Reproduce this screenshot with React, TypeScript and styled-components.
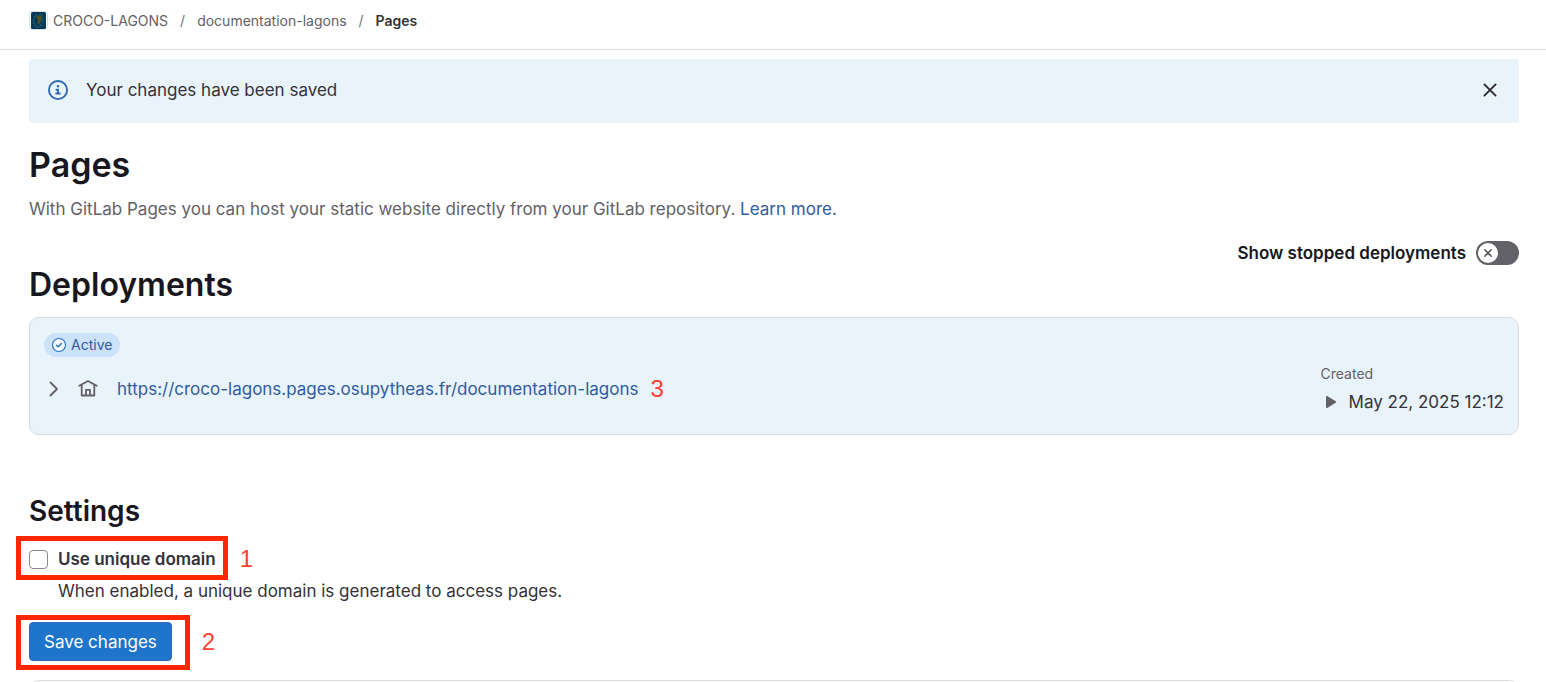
import React, { useState } from 'react';
import styled, { createGlobalStyle, css } from 'styled-components';

const GlobalStyle = createGlobalStyle`
  *, *::before, *::after { box-sizing: border-box; }
  body {
    margin: 0;
    background: #fff;
    color: #333238;
    font-family: Inter, "Noto Sans", sans-serif;
    font-size: 17px;
    line-height: 24px;
  }
  button, input { font: inherit; }
`;

const Shell = styled.div`
  height: 100vh;
  overflow: hidden;
`;

const TopBar = styled.header`
  height: 50px;
  padding: 0 29px 8px;
  display: flex;
  align-items: center;
  border-bottom: 1px solid #dcdcde;
`;

const Crumbs = styled.ol`
  display: flex;
  align-items: center;
  margin: 0;
  padding: 0;
  list-style: none;
  font-size: 14px;
  line-height: 20px;
`;

const Crumb = styled.li`
  display: flex;
  align-items: center;
  & + &::before {
    content: "/";
    margin: 0 12px;
    color: #737278;
  }
`;

const CrumbLink = styled.a<{ $current?: boolean }>`
  display: flex;
  align-items: center;
  gap: 5px;
  text-decoration: none;
  color: ${(p) => (p.$current ? '#333238' : '#626168')};
  font-weight: ${(p) => (p.$current ? 600 : 400)};
`;

const Content = styled.main`
  padding: 9px 27px 0 29px;
`;

const Alert = styled.div`
  display: flex;
  align-items: center;
  height: 64px;
  padding: 0 19px 2px;
  border-radius: 4px;
  background: #e9f3fc;
`;

const AlertText = styled.p`
  flex: 1;
  margin: 0 0 0 18px;
`;

const IconButton = styled.button`
  display: flex;
  align-items: center;
  justify-content: center;
  width: 20px;
  height: 20px;
  padding: 0;
  border: 0;
  background: none;
  color: #28272d;
  cursor: pointer;
`;

const PageTitle = styled.h1`
  margin: 20px 0 0;
  font-size: 34px;
  line-height: 44px;
  font-weight: 600;
  color: #18171d;
`;

const Intro = styled.p`
  margin: 10px 0 0;
  color: #626168;
`;

const Link = styled.a`
  color: #2f5ca0;
  text-decoration: none;
`;

const ToggleRow = styled.label`
  display: flex;
  align-items: center;
  justify-content: flex-end;
  gap: 10px;
  margin-top: 20px;
  font-weight: 600;
  color: #18171d;
  cursor: pointer;
`;

const Toggle = styled.button<{ $on: boolean }>`
  display: flex;
  align-items: center;
  justify-content: ${(p) => (p.$on ? 'flex-end' : 'flex-start')};
  width: 43px;
  height: 24px;
  padding: 0 2px;
  border: 0;
  border-radius: 12px;
  background: ${(p) => (p.$on ? '#1f75cb' : '#626168')};
  cursor: pointer;
`;

const Knob = styled.span`
  display: flex;
  align-items: center;
  justify-content: center;
  width: 20px;
  height: 20px;
  border-radius: 50%;
  background: #fff;
  color: #626168;
`;

const SectionTitle = styled.h2<{ $small?: boolean }>`
  margin: 0;
  font-size: ${(p) => (p.$small ? 28 : 32)}px;
  line-height: 40px;
  font-weight: 600;
  color: #18171d;
`;

const Card = styled.section`
  display: flex;
  align-items: center;
  justify-content: space-between;
  height: 118px;
  margin: 12px 0 56px;
  padding: 0 14px;
  border: 1px solid #d7dbe2;
  border-radius: 10px;
  background: #e9f3fc;
`;

const CardMain = styled.div`
  display: flex;
  flex-direction: column;
  align-items: flex-start;
  gap: 20px;
  padding-bottom: 18px;
`;

const Badge = styled.span`
  display: flex;
  align-items: center;
  gap: 4px;
  height: 24px;
  padding: 0 8px 0 7px;
  border-radius: 12px;
  background: #cbe2f9;
  color: #2f5ca0;
  font-size: 14px;
  line-height: 24px;
`;

const UrlRow = styled.div`
  display: flex;
  align-items: center;
  color: #626168;
  & > svg { margin: 0 19px 0 14px; }
  & > button { color: #626168; }
`;

const Created = styled.div`
  padding-top: 26px;
`;

const CreatedLabel = styled.div`
  font-size: 14px;
  line-height: 20px;
  color: #626168;
`;

const CreatedValue = styled.div`
  display: flex;
  align-items: center;
  gap: 12px;
  margin-top: 6px;
  padding-left: 4px;
`;

const outline = css`
  position: relative;
  width: max-content;
  &::after {
    content: "";
    position: absolute;
    border: 5px solid #ff2600;
    pointer-events: none;
  }
`;

const Row = styled.div<{ $top: number }>`
  display: flex;
  align-items: center;
  margin-top: ${(p) => p.$top}px;
`;

const CheckRow = styled.label`
  ${outline}
  display: flex;
  align-items: center;
  gap: 10px;
  font-weight: 600;
  &::after { inset: -11px -12px -9px -13px; }
`;

const Checkbox = styled.input`
  appearance: none;
  width: 19px;
  height: 19px;
  margin: 0;
  border: 1px solid #89888d;
  border-radius: 4px;
  background: #fff;
  &:checked { background: #1f75cb; border-color: #1f75cb; }
`;

const Help = styled.p`
  margin: 8px 0 0 29px;
`;

const SaveWrap = styled.div`
  ${outline}
  &::after { inset: -7px -18px -9px -13px; }
`;

const SaveButton = styled.button`
  display: block;
  height: 39px;
  padding: 0 14px;
  border: 1px solid #2f68b4;
  border-radius: 4px;
  background: #1f75cb;
  color: #fff;
  cursor: pointer;
`;

const StepNumber = styled.span<{ $gap: number }>`
  margin-left: ${(p) => p.$gap}px;
  font-family: "Liberation Sans", Arial, sans-serif;
  font-size: 24px;
  line-height: 24px;
  color: #ff4034;
`;

const NextPanel = styled.section`
  height: 60px;
  margin-top: 19px;
  border: 1px solid #dcdcde;
  border-radius: 10px;
`;

const Avatar = () => (
  <svg width="19" height="19" viewBox="0 0 19 19" aria-hidden="true">
    <rect x="0.5" y="0.5" width="18" height="18" rx="3" fill="#fff" stroke="#dcdcde" />
    <rect x="2" y="1" width="15" height="17" rx="1.5" fill="#073a59" />
    <path d="M8 3.5C4 6 3.5 11 6 14.500s5 1 6.500-1" fill="none" stroke="#2f7480" strokeWidth="1" strokeDasharray="2 1" />
    <path d="M11 3c4 2 3.500 8 1 11" fill="none" stroke="#256b72" strokeWidth="1" strokeDasharray="1 1" />
    <path d="M7 5.500l3.500-1.500 2.500 2-1 4-2 3.500-1.500-.5.500-4z" fill="#574f21" />
  </svg>
);

const InfoIcon = () => (
  <svg width="20" height="20" viewBox="0 0 16 16" fill="#2f68b4" aria-hidden="true">
    <path fillRule="evenodd" clipRule="evenodd" d="M8 14.500a6.500 6.500 0 1 0 0-13 6.500 6.500 0 0 0 0 13ZM8 16A8 8 0 1 0 8 0a8 8 0 0 0 0 16Zm1-11a1 1 0 1 1-2 0 1 1 0 0 1 2 0ZM5.750 10.750A.75.75 0 0 1 6.500 10h.75V8.500h-.5a.75.75 0 0 1 0-1.500h2v3h.75a.75.75 0 0 1 0 1.500h-3a.75.75 0 0 1-.75-.75Z" />
  </svg>
);

const CrossIcon = ({ size, width }: { size: number; width: number }) => (
  <svg width={size} height={size} viewBox="0 0 16 16" fill="none" stroke="currentColor" strokeWidth={width} strokeLinecap="round" aria-hidden="true">
    <path d="M3 3l10 10M13 3L3 13" />
  </svg>
);

const CheckCircle = () => (
  <svg width="16" height="16" viewBox="0 0 16 16" fill="none" stroke="#1f75cb" aria-hidden="true">
    <circle cx="8" cy="8" r="6.500" fill="#fff" strokeWidth="1.200" />
    <path d="M5.500 8.200l1.700 1.600 3.200-3.300" strokeWidth="1.500" strokeLinecap="round" strokeLinejoin="round" />
  </svg>
);

const Chevron = () => (
  <svg width="10" height="16" viewBox="0 0 10 16" fill="none" stroke="currentColor" strokeWidth="1.800" strokeLinecap="round" strokeLinejoin="round" aria-hidden="true">
    <path d="M1.500 1.500L8 8l-6.500 6.500" />
  </svg>
);

const HomeIcon = () => (
  <svg width="20" height="20" viewBox="0 0 20 20" fill="none" stroke="currentColor" strokeWidth="1.800" strokeLinecap="round" strokeLinejoin="round" aria-hidden="true">
    <path d="M1.300 6.800L10 2l8.700 4.800M3.700 6v10.500h12.600V6M8 16.500v-5.700h4v5.700" />
  </svg>
);

const PlayIcon = () => (
  <svg width="12" height="14" viewBox="0 0 12 14" fill="#626168" aria-hidden="true">
    <path d="M1 1.700c0-.7.600-1 1.200-.7l8.500 5.300c.5.400.5 1 0 1.400L2.200 13c-.6.300-1.200 0-1.200-.7z" />
  </svg>
);

export default function App() {
  const [showStopped, setShowStopped] = useState(false);

  return (
    <Shell>
      <GlobalStyle />
      <TopBar>
        <nav aria-label="Breadcrumb">
          <Crumbs>
            <Crumb><CrumbLink href="#"><Avatar />CROCO-LAGONS</CrumbLink></Crumb>
            <Crumb><CrumbLink href="#">documentation-lagons</CrumbLink></Crumb>
            <Crumb><CrumbLink href="#" $current aria-current="page">Pages</CrumbLink></Crumb>
          </Crumbs>
        </nav>
      </TopBar>
      <Content>
        <Alert role="status">
          <InfoIcon />
          <AlertText>Your changes have been saved</AlertText>
          <IconButton aria-label="Dismiss"><CrossIcon size={18} width={1.6} /></IconButton>
        </Alert>
        <PageTitle>Pages</PageTitle>
        <Intro>
          With GitLab Pages you can host your static website directly from your GitLab repository.{' '}
          <Link href="#">Learn more.</Link>
        </Intro>
        <ToggleRow>
          Show stopped deployments
          <Toggle type="button" role="switch" aria-checked={showStopped} $on={showStopped} onClick={() => setShowStopped(!showStopped)}>
            <Knob><CrossIcon size={10} width={2.6} /></Knob>
          </Toggle>
        </ToggleRow>
        <SectionTitle>Deployments</SectionTitle>
        <Card>
          <CardMain>
            <Badge><CheckCircle />Active</Badge>
            <UrlRow>
              <IconButton aria-label="Expand"><Chevron /></IconButton>
              <HomeIcon />
              <Link href="#">https://croco-lagons.pages.osupytheas.fr/documentation-lagons</Link>
              <StepNumber $gap={12}>3</StepNumber>
            </UrlRow>
          </CardMain>
          <Created>
            <CreatedLabel>Created</CreatedLabel>
            <CreatedValue><PlayIcon />May 22, 2025 12:12</CreatedValue>
          </Created>
        </Card>
        <SectionTitle $small>Settings</SectionTitle>
        <Row $top={16}>
          <CheckRow>
            <Checkbox type="checkbox" />
            Use unique domain
          </CheckRow>
          <StepNumber $gap={24}>1</StepNumber>
        </Row>
        <Help>When enabled, a unique domain is generated to access pages.</Help>
        <Row $top={19}>
          <SaveWrap><SaveButton type="button">Save changes</SaveButton></SaveWrap>
          <StepNumber $gap={30}>2</StepNumber>
        </Row>
        <NextPanel />
      </Content>
    </Shell>
  );
}
